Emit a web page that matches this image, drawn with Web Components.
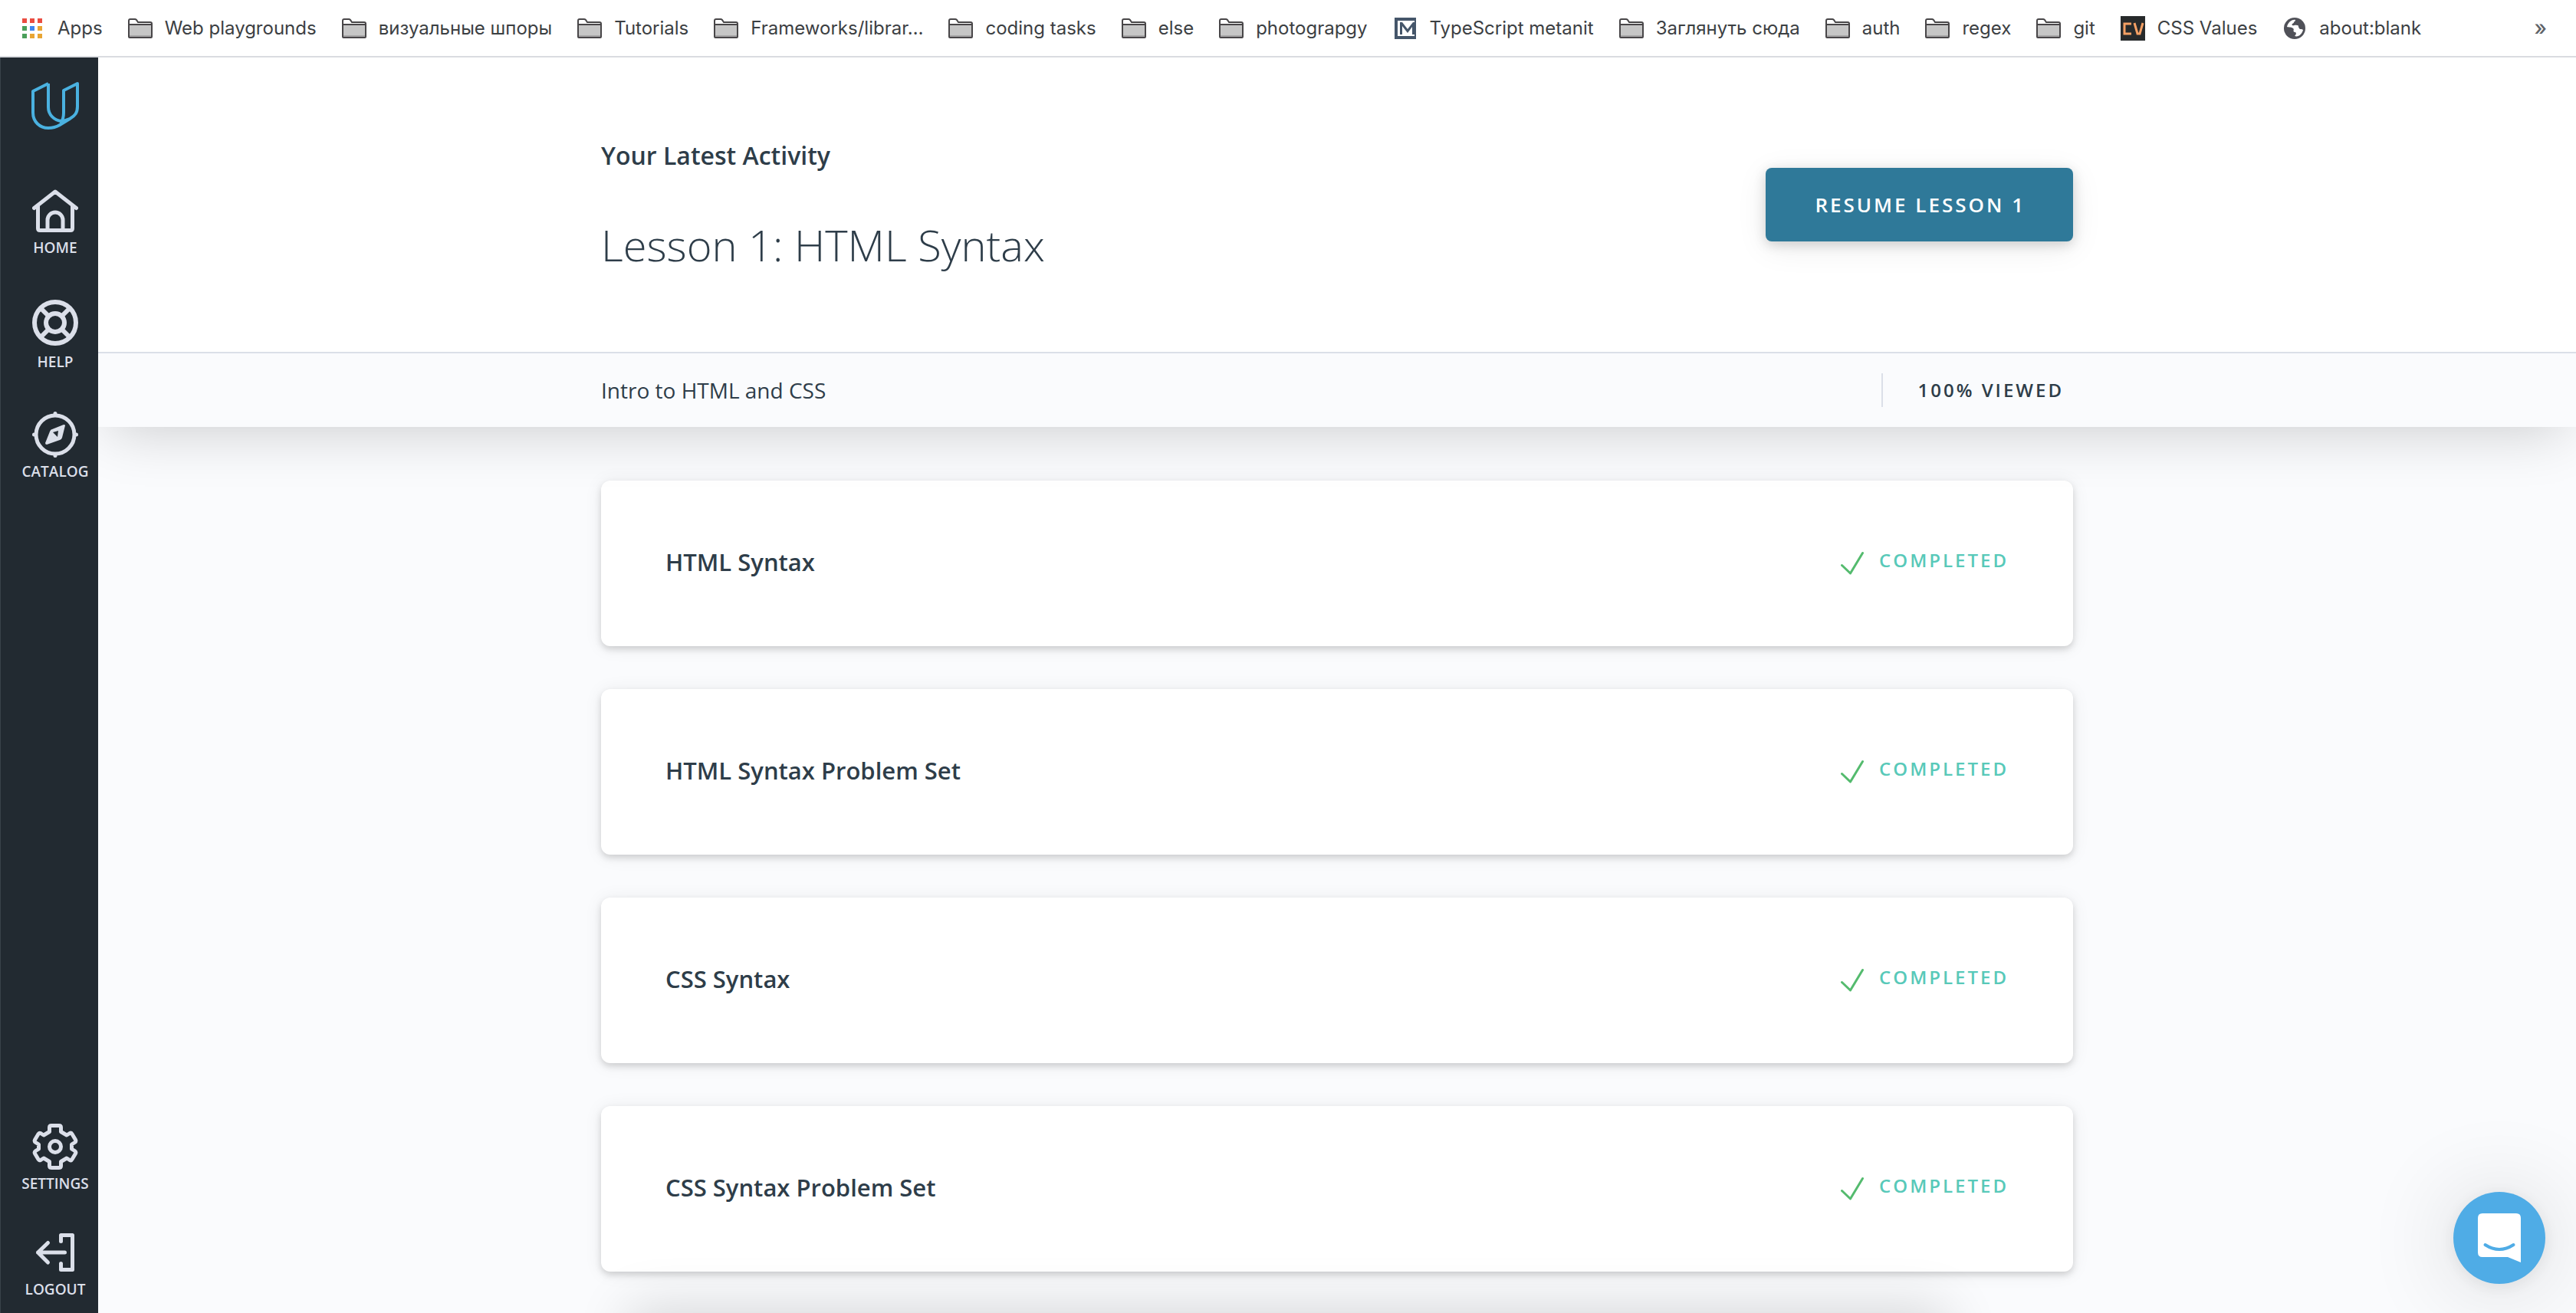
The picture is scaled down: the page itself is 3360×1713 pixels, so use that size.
<!DOCTYPE html>
<html lang="en">
<head>
<meta charset="utf-8">
<title>Intro to HTML and CSS</title>
<style>
  html, body { margin: 0; height: 100%; }
  body { background: #fafbfd; color: #2e3d49; font-family: "Open Sans", "Noto Sans", sans-serif; overflow: hidden; }
</style>
</head>
<body>
<course-app></course-app>

<script>
const ICONS = {
  apps: `<svg width="32" height="28" viewBox="0 0 32 28"><g fill="#ea4d41"><path d="M2 1h6v6H2zM12 1h6v6h-6zM22 1h6v6h-6z"/></g><g fill="#4a9f5a"><path d="M2 11h6v6H2zM2 21h6v6H2z"/></g><path fill="#3f86f0" d="M12 11h6v6h-6z"/><path fill="#e8a534" d="M22 11h6v6h-6zM12 21h6v6h-6zM22 21h6v6h-6z"/></svg>`,
  folder: `<svg width="32" height="26" viewBox="0 0 32 26"><path d="M1 24V3q0-2 2-2h6q1 0 2 1l2 3h16q2 0 2 2v17q0 1-1 1H2q-1 0-1-1z" fill="#fff" stroke="#484648" stroke-width="2"/><path d="M2 9h28v15H2z" fill="#c6c6c6"/><path d="M2 22h28v2H2z" fill="#a6a5a6"/><path d="M1 8h30" stroke="#484648" stroke-width="2"/></svg>`,
  metanit: `<svg width="32" height="28" viewBox="0 0 32 28"><path fill="#45566a" d="M2 0h28v28H2z"/><path fill="#fff" d="M6 4h24v20H6z"/><path fill="#45566a" d="M28 4h2v20h-2zM9 6h3l7 9 7-9h2v16h-3V12l-6 8-7-9v11H9z"/></svg>`,
  cv: `<svg width="32" height="32" viewBox="0 0 32 32"><path fill="#272a2b" d="M0 0h32v32H0z"/><path d="M14 10H5v13h9M18 9l4 14h3l4-14" fill="none" stroke="#f5a064" stroke-width="3"/></svg>`,
  globe: `<svg width="32" height="28" viewBox="0 0 32 28"><circle cx="16" cy="14" r="14" fill="#505158"/><path d="M17 3c-5-1-10 4-11 9 3 1 6 0 8 2 2 1-1 4 2 5 2 0 3 2 0 5 5 2 10-3 11-8-2-2-4 0-5-2-2-3 0-4-3-4-3-1-4 1-6 0-2-2 2-2 2-4 0-1 2-1 2-3z" fill="#fff"/></svg>`,
  logo: `<svg width="62" height="62" viewBox="0 0 62 62" fill="none" stroke="#4ab1e0" stroke-width="4" stroke-linejoin="round"><path d="M22 3v30c0 10 8 17 17 18M22 2 2 12v28c0 12 9 20 20 20 6 0 10-1 15-4l13-8c7-4 10-8 10-16V2L42 11v29c0 6-1 10-4 14M22 2v4M39 51c5 0 8-2 11-3"/></svg>`,
  home: `<svg width="60" height="60" viewBox="0 0 60 60" fill="none" stroke="#dbdfe9" stroke-width="5" stroke-linecap="round" stroke-linejoin="round"><path d="M2.500 26.500 30 5l27.500 21.500M7.500 24v29q0 2.500 2.500 2.500h40q2.500 0 2.500-2.500V24M20 55V42a10 10 0 0 1 20 0v13"/></svg>`,
  help: `<svg width="60" height="66" viewBox="0 0 60 66" fill="none" stroke="#dbdfe9" stroke-width="6"><circle cx="30" cy="33" r="27"/><circle cx="30" cy="33" r="12"/><path d="m11 14 10.500 10.500M49 14 38.500 24.500M11 52l10.500-10.500M49 52 38.500 41.500"/></svg>`,
  catalog: `<svg width="60" height="60" viewBox="0 0 60 60" fill="none" stroke="#dbdfe9" stroke-width="5" stroke-linecap="round" stroke-linejoin="round"><circle cx="30" cy="30" r="25"/><path d="M30 2.500v2M30 55.500v2M2.500 30h2M55.500 30h2"/><path fill="#dbdfe9" fill-rule="evenodd" stroke="none" d="M43 18q0-1-2-1L26 23q-2 0-3 3l-6 15q0 2 2 2l17-6q2 0 3-3zm-9 7-1 8-6-6z"/></svg>`,
  settings: `<svg width="60" height="60" viewBox="0 0 60 60" fill="none" stroke="#dbdfe9" stroke-width="5" stroke-linejoin="round"><circle cx="30" cy="30" r="7.500"/><path d="M22.500 5q0-2.500 2.500-2.500h10q2.500 0 2.500 2.500v5.500l7.500 4.500 4-2.500q2-1 3 1l4.500 7.500q1 2-1 3.500L51.500 27v6l4 2.500q2 1.500 1 3.500L52 46.500q-1 2-3 1L45 45l-7.500 4.500V55q0 2.500-2.500 2.500H25q-2.500 0-2.500-2.500v-5.500L15 45l-4 2.500q-2 1-3-1L3.500 39q-1-2 1-3.500L8.500 33v-6l-4-2.500q-2-1.500-1-3.500L8 13.500q1-2 3-1l4 2.500 7.500-4.500z"/></svg>`,
  logout: `<svg width="60" height="55" viewBox="0 0 60 55" fill="none" stroke="#dbdfe9" stroke-width="5" stroke-linecap="round" stroke-linejoin="round"><path d="M37.500 10.500v-8h15v45h-15v-8M42.500 25h-35M20.500 12.500 7.500 25l13 13"/></svg>`,
  check: `<svg width="30" height="38" viewBox="0 -4 30 38" fill="none" stroke="#54bb6e" stroke-width="3" stroke-linecap="round" stroke-linejoin="round"><path d="m1.500 21.500 11 10.500L28.500 5.500"/></svg>`,
  chat: `<svg width="56" height="64" viewBox="0 0 56 64"><path fill="#fff" d="M6 0h44q6 0 6 6v58l-17-7H6q-6 0-6-6V6q0-6 6-6z"/><path d="M9.500 41q18.500 12 37 0" fill="none" stroke="#4face6" stroke-width="4" stroke-linecap="round"/></svg>`
};

/* Attaches an open shadow root holding the element's styles and markup. */
function define(name, css, markup) {
  customElements.define(name, class extends HTMLElement {
    connectedCallback() {
      if (this.shadowRoot) return;
      const t = document.createElement('template');
      t.innerHTML = `<style>*{box-sizing:border-box}svg{display:block;flex:none}${css}</style>${markup(this)}`;
      this.attachShadow({ mode: 'open' }).append(t.content.cloneNode(true));
    }
  });
}

define('bookmark-link', `
  :host { display: block; flex: none; }
  a { display: flex; align-items: center; gap: 16px; color: #3c4043; text-decoration: none; white-space: nowrap; }
`, el => `<a href="#">${ICONS[el.getAttribute('icon') || 'folder']}<span><slot></slot></span></a>`);

define('bookmarks-bar', `
  :host { display: flex; align-items: center; justify-content: space-between; height: 75px; padding: 0 38px 0 27px;
    box-sizing: border-box; background: #fff; border-bottom: 2px solid #dadce0; font: 24px/32px Inter, "Noto Sans", sans-serif; }
  nav { display: flex; gap: 33px; }
  button { border: 0; padding: 0; background: none; color: #5f6368; font: 500 27px/32px Inter, sans-serif; }
`, () => `<nav aria-label="Bookmarks">
  <bookmark-link icon="apps">Apps</bookmark-link>
  <bookmark-link>Web playgrounds</bookmark-link>
  <bookmark-link>визуальные шпоры</bookmark-link>
  <bookmark-link>Tutorials</bookmark-link>
  <bookmark-link>Frameworks/librar…</bookmark-link>
  <bookmark-link>coding tasks</bookmark-link>
  <bookmark-link>else</bookmark-link>
  <bookmark-link>photograpgy</bookmark-link>
  <bookmark-link icon="metanit">TypeScript metanit</bookmark-link>
  <bookmark-link>Заглянуть сюда</bookmark-link>
  <bookmark-link>auth</bookmark-link>
  <bookmark-link>regex</bookmark-link>
  <bookmark-link>git</bookmark-link>
  <bookmark-link icon="cv">CSS Values</bookmark-link>
  <bookmark-link icon="globe">about:blank</bookmark-link>
</nav><button>»</button>`);

define('nav-item', `
  :host { display: block; }
  a { display: flex; flex-direction: column; align-items: center; gap: 6px; color: #dbdfe9; text-decoration: none; font-weight: 600; font-size: 19px; line-height: 24px; }
`, el => `<a href="#">${ICONS[el.getAttribute('icon')]}<span><slot></slot></span></a>`);

define('side-nav', `
  :host { display: flex; flex-direction: column; flex: none; width: 128px; padding: 32px 0 19px 15px; box-sizing: border-box; background: #222a31; border-left: 1px solid #39424a; }
  .logo { align-self: center; margin-bottom: 76px; }
  nav { flex: 1; display: flex; flex-direction: column; gap: 53px; }
  .push { margin-top: auto; }
`, () => `<a class="logo" href="#" aria-label="Udacity">${ICONS.logo}</a>
<nav aria-label="Main">
  <nav-item icon="home">HOME</nav-item>
  <nav-item icon="help">HELP</nav-item>
  <nav-item icon="catalog">CATALOG</nav-item>
  <nav-item class="push" icon="settings">SETTINGS</nav-item>
  <nav-item icon="logout">LOGOUT</nav-item>
</nav>`);

define('course-header', `
  :host { display: block; position: relative; z-index: 1; box-shadow: 0 20px 70px -15px rgba(0,0,0,.19); clip-path: inset(0 0 -120px 0); }
  .wrap { width: 1920px; max-width: 100%; margin: 0 auto; display: flex; align-items: center; justify-content: space-between; }
  .hero { background: #fff; padding: 104px 0; border-bottom: 2px solid #dbdfe8; }
  .text { display: flex; flex-direction: column; gap: 56px; }
  h1, h2, p { margin: 0; }
  h2 { font-size: 32px; line-height: 48px; font-weight: 600; }
  h1 { font-size: 56px; line-height: 72px; font-weight: 300; }
  button { height: 96px; padding: 0 62px 0 64px; border: 0; border-radius: 8px; background: #2f7999; color: #fff;
    font: 600 26px/32px "Open Sans", sans-serif; letter-spacing: 3px;
    box-shadow: 0 4px 16px rgba(0,0,0,.16), 0 8px 40px rgba(0,0,0,.08); }
  .bar { background: #fafbfd; }
  .bar .wrap { height: 96px; }
  p { font-size: 28px; line-height: 40px; }
  .viewed { padding: 0 12px 0 46px; border-left: 2px solid #dbdfe8; font-size: 24px; line-height: 44px; font-weight: 600; letter-spacing: 3px; }
`, () => `<section class="hero"><div class="wrap">
  <div class="text"><h2>Your Latest Activity</h2><h1>Lesson 1: HTML Syntax</h1></div>
  <button>RESUME LESSON 1</button>
</div></section>
<section class="bar"><div class="wrap"><p>Intro to HTML and CSS</p><span class="viewed">100% VIEWED</span></div></section>`);

define('lesson-card', `
  :host { display: block; }
  article { display: flex; align-items: center; justify-content: space-between; height: 216px; padding: 0 84px 4px; background: #fff; border-radius: 12px;
    box-shadow: 0 4px 8px rgba(0,0,0,.15), 0 2px 24px rgba(0,0,0,.07); }
  h3 { margin: 0; font-size: 31px; line-height: 48px; font-weight: 600; }
  .status { display: flex; align-items: center; gap: 20px; padding-bottom: 4px; color: #58c9b9; font-size: 24px; line-height: 32px; font-weight: 600; letter-spacing: 3px; }
`, () => `<article><h3><slot></slot></h3><span class="status">${ICONS.check}<span>COMPLETED</span></span></article>`);

define('chat-launcher', `
  :host { position: fixed; right: 40px; bottom: 38px; z-index: 3; }
  button { display: flex; align-items: center; justify-content: center; width: 120px; height: 120px; padding: 0; border: 0; border-radius: 50%; background: #4face6;
    box-shadow: 0 4px 24px rgba(0,0,0,.08), 0 4px 120px rgba(0,0,0,.16); }
`, () => `<button aria-label="Open chat">${ICONS.chat}</button>`);

/* Drawer parked below the window; only its shadow shows. */
define('bottom-drawer', `
  :host { position: fixed; z-index: 2; top: 100%; left: 820px; right: 820px; height: 120px; box-shadow: 0 -8px 70px rgba(0,0,0,.14); }
`, () => ``);

define('course-app', `
  :host { display: flex; flex-direction: column; min-height: 100%; }
  .body { flex: 1; display: flex; }
  main { flex: 1; min-width: 0; }
  .lessons { display: flex; flex-direction: column; gap: 56px; width: 1920px; max-width: 100%; margin: 0 auto; padding: 70px 0 54px; }
`, () => `<bookmarks-bar></bookmarks-bar>
<div class="body"><side-nav></side-nav>
<main><course-header></course-header>
<div class="lessons">
  <lesson-card>HTML Syntax</lesson-card>
  <lesson-card>HTML Syntax Problem Set</lesson-card>
  <lesson-card>CSS Syntax</lesson-card>
  <lesson-card>CSS Syntax Problem Set</lesson-card>
</div></main></div>
<bottom-drawer></bottom-drawer><chat-launcher></chat-launcher>`);
</script>
</body>
</html>
